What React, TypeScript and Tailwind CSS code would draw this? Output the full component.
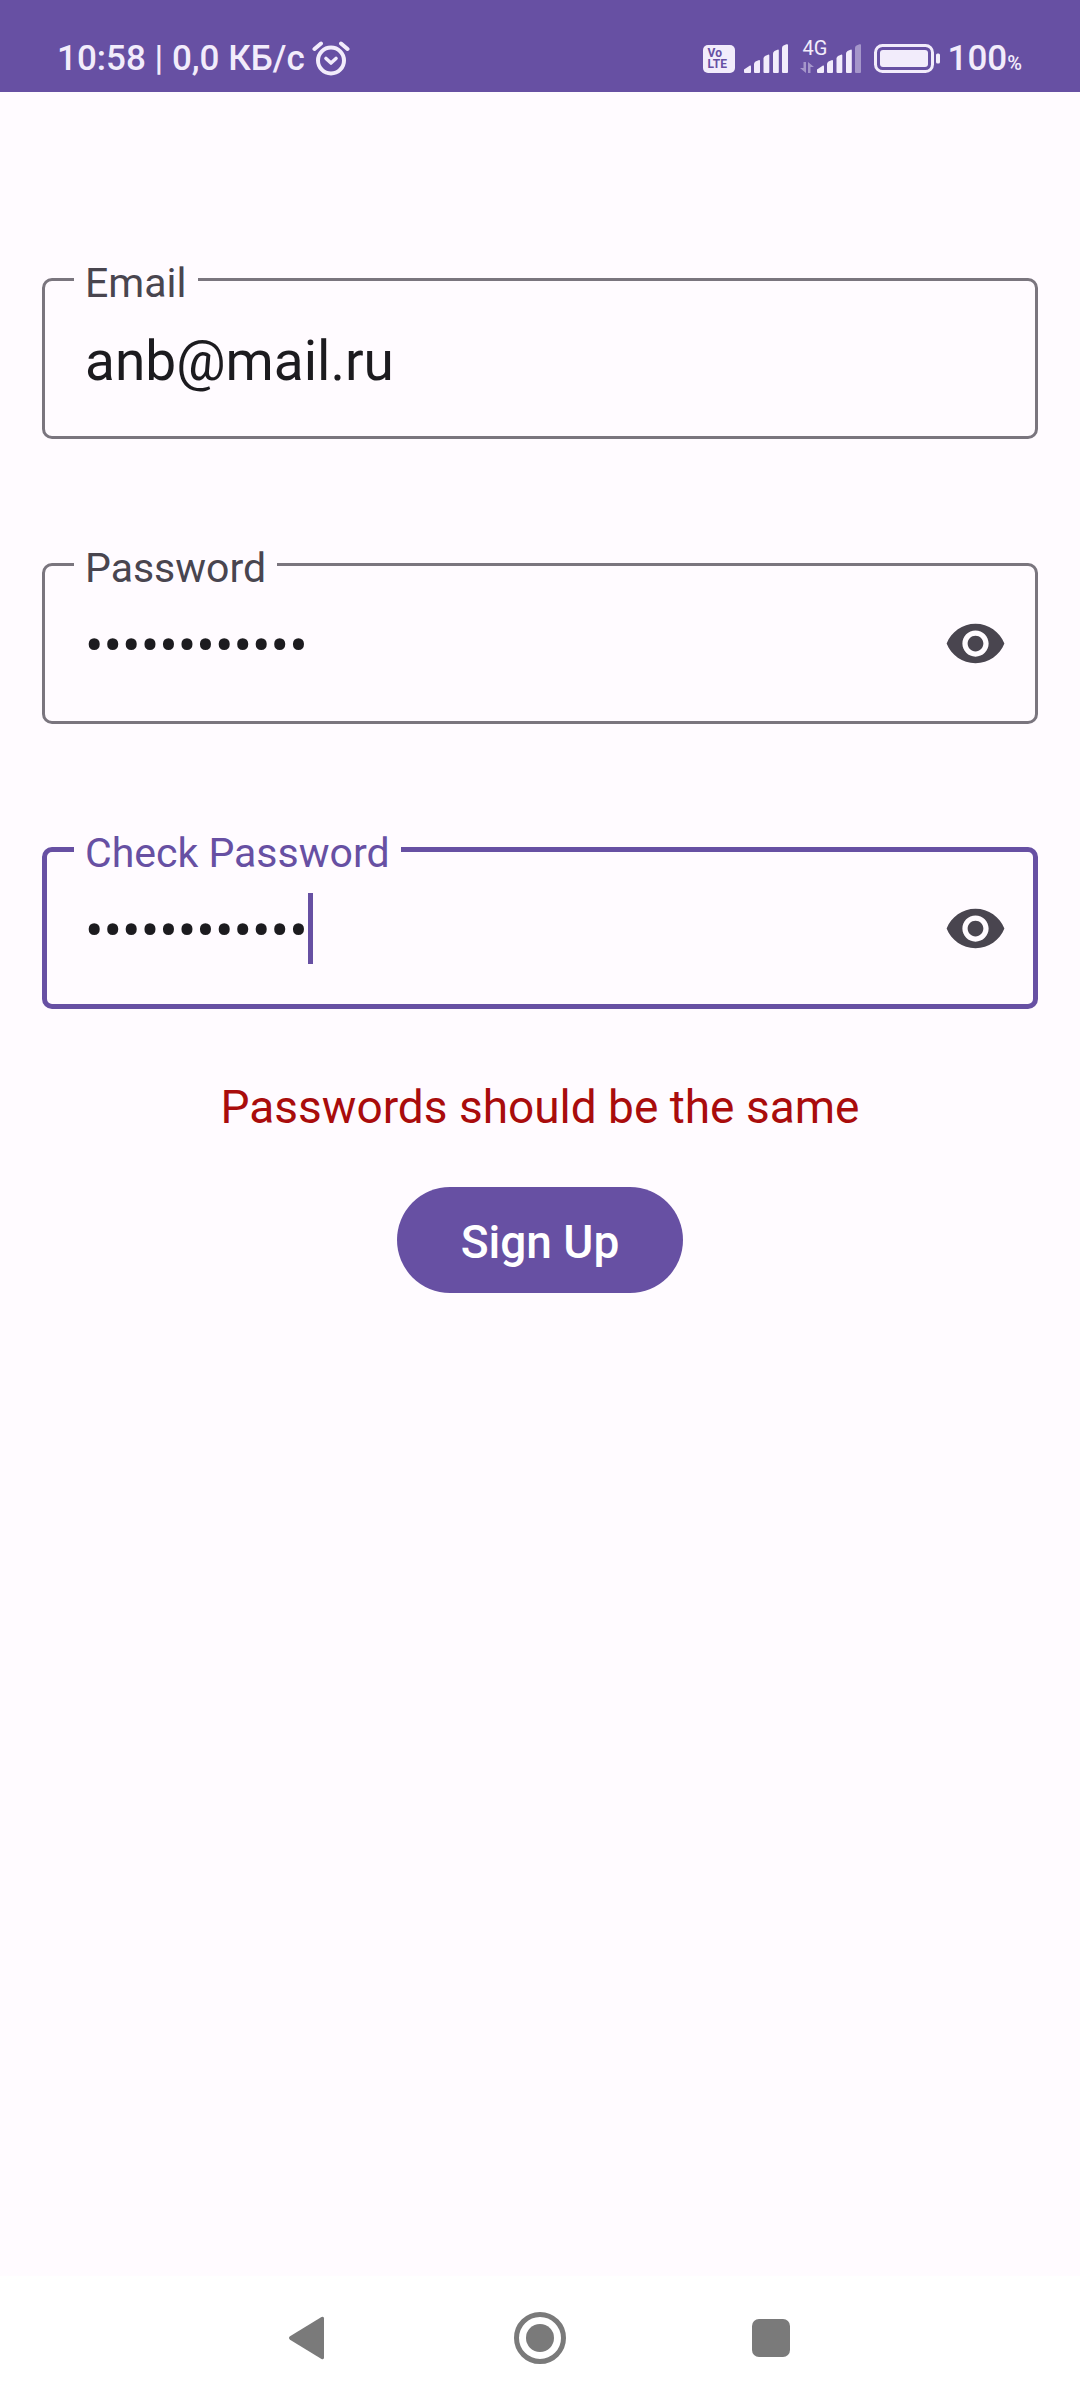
import { useState } from "react";
import type { ReactNode } from "react";

type FieldProps = {
  id: string;
  label: string;
  type: "email" | "password";
  initial: string;
  active?: boolean;
};

function EyeIcon() {
  return (
    <svg viewBox="0 0 24 24" className="size-[63px]" fill="currentColor" aria-hidden="true">
      <path d="M12 4.5C7 4.5 2.73 7.61 1 12c1.73 4.39 6 7.5 11 7.5s9.27-3.11 11-7.5c-1.73-4.39-6-7.5-11-7.5zM12 17c-2.76 0-5-2.24-5-5s2.24-5 5-5 5 2.24 5 5-2.24 5-5 5zm0-8c-1.66 0-3 1.34-3 3s1.34 3 3 3 3-1.34 3-3-1.34-3-3-3z" />
    </svg>
  );
}

function OutlinedField({ id, label, type, initial, active = false }: FieldProps) {
  const [value, setValue] = useState(initial);
  const [visible, setVisible] = useState(false);
  const secret = type === "password";
  return (
    <fieldset
      className={
        active
          ? "min-w-0 rounded-[10px] border-5 border-[#6750a3] pr-[26px] pb-6 pl-[27px]"
          : "min-w-0 rounded-[10px] border-3 border-[#7a757e] pr-[28px] pb-[26px] pl-[29px]"
      }
    >
      <legend className="px-[11px] pt-2">
        <label
          htmlFor={id}
          className={
            active
              ? "block text-[41px] leading-[47px] text-[#6750a3]"
              : "block text-[41px] leading-[47px] text-[#49454f]"
          }
        >
          {label}
        </label>
      </legend>
      <div className="flex h-[103px] items-center pl-[11px]">
        <input
          id={id}
          type={secret && visible ? "text" : type}
          value={value}
          onChange={(e) => setValue(e.target.value)}
          className={
            active
              ? "field-sizing-content pt-1 text-[55px] leading-[64px] text-[#1c1b1f] caret-transparent outline-none"
              : "min-w-0 flex-1 pt-1 text-[55px] leading-[64px] text-[#1c1b1f] outline-none"
          }
        />
        {active && <span className="h-[71px] w-[5px] bg-[#6750a3]" />}
        {secret && (
          <button
            type="button"
            aria-label={visible ? "Hide password" : "Show password"}
            onClick={() => setVisible(!visible)}
            className="ml-auto text-[#49454f]"
          >
            <EyeIcon />
          </button>
        )}
      </div>
    </fieldset>
  );
}

function SignalIcon({ weakLast = false }: { weakLast?: boolean }) {
  return (
    <svg viewBox="0 0 44 30" className="h-[30px] w-11" fill="currentColor" aria-hidden="true">
      <path d="M0 25.5 L6 21.5 Q7 21 7 22.5 V28 Q7 29 6 29 H1 Q0 29 0 28Z" />
      <path d="M10 20 Q10 18.500 11.500 17.500 L14.500 16.200 Q16 15.700 16 17 V28 Q16 29 15 29 H11 Q10 29 10 28Z" />
      <path d="M19.500 14.500 Q19.500 13 21 12 L24 10.700 Q25.300 10.300 25.300 11.500 V28 Q25.300 29 24.300 29 H20.500 Q19.500 29 19.500 28Z" />
      <path d="M29 9.500 Q29 8 30.500 7 L33.500 5.700 Q34.800 5.300 34.800 6.500 V28 Q34.800 29 33.800 29 H30 Q29 29 29 28Z" />
      <path
        opacity={weakLast ? 0.45 : 1}
        d="M38 4 Q38 2.500 39.500 1.600 L42.500 0.300 Q44 -0.200 44 1 V28 Q44 29 43 29 H39 Q38 29 38 28Z"
      />
    </svg>
  );
}

function AlarmIcon() {
  return (
    <svg
      viewBox="0 0 38 36"
      className="h-9 w-[38px]"
      fill="none"
      stroke="currentColor"
      strokeWidth="4"
      strokeLinecap="round"
      strokeLinejoin="round"
      aria-hidden="true"
    >
      <circle cx="19" cy="19.5" r="13" />
      <path d="M14 17.500 19 22 24 17.500" strokeWidth="3.600" />
      <path d="M2.500 8 9 2.500M35.500 8 29 2.500" />
    </svg>
  );
}

function StatusBar() {
  return (
    <header className="flex h-[92px] items-end justify-between bg-[#6750a3] pr-[58px] pb-[13px] pl-[57px] text-[#f2ecfb]">
      <div className="flex items-center gap-[7px]">
        <span className="text-[35px] leading-[40px] font-medium">10:58 | 0,0 КБ/с</span>
        <AlarmIcon />
      </div>
      <div className="flex items-center">
        <span className="flex h-7 w-8 flex-col items-start justify-center rounded-[5px] bg-current pl-[5px]">
          <span className="text-[12px] leading-[11px] font-bold text-[#6750a3]">Vo</span>
          <span className="text-[12px] leading-[11px] font-bold text-[#6750a3]">LTE</span>
        </span>
        <span className="ml-[9px]">
          <SignalIcon />
        </span>
        <span className="relative ml-3 flex items-end pl-[17px]">
          <span className="absolute -top-[6px] left-[3px] text-[20px] leading-[20px]">4G</span>
          <svg
            viewBox="0 0 14 11"
            className="absolute bottom-[1px] left-0 h-[11px] w-[14px]"
            fill="currentColor"
            opacity="0.45"
            aria-hidden="true"
          >
            <path d="M3.500 0H6V11L0 6H3.500ZM8 0 14 5H10.500V11H8Z" />
          </svg>
          <SignalIcon weakLast />
        </span>
        <svg viewBox="0 0 66 30" className="ml-[13px] h-[30px] w-[66px]" aria-hidden="true">
          <rect x="1.500" y="1.500" width="57" height="26" rx="7" fill="none" stroke="currentColor" strokeWidth="3" />
          <rect x="6" y="6" width="48" height="17" rx="3" fill="currentColor" />
          <rect x="62" y="9.500" width="4" height="10" rx="1.500" fill="currentColor" />
        </svg>
        <span className="ml-2 flex items-baseline text-[35px] leading-[40px] font-medium">
          100<span className="text-[20px] leading-[20px]">%</span>
        </span>
      </div>
    </header>
  );
}

function NavButton({ label, children }: { label: string; children: ReactNode }) {
  return (
    <button type="button" aria-label={label} className="flex w-[52px] justify-center text-[#7a7a7a]">
      <svg viewBox="0 0 52 52" className="size-[52px]" fill="currentColor" aria-hidden="true">
        {children}
      </svg>
    </button>
  );
}

export default function App() {
  return (
    <div className="flex min-h-screen flex-col bg-[#fffbff] font-[Roboto,sans-serif]">
      <StatusBar />
      <main className="flex-1 px-[42px] pt-[160px]">
        <form className="flex flex-col" onSubmit={(e) => e.preventDefault()}>
          <div className="flex flex-col gap-[98px]">
            <OutlinedField id="email" label="Email" type="email" initial="anb@mail.ru" />
            <OutlinedField id="password" label="Password" type="password" initial="password1234" />
            <OutlinedField id="check" label="Check Password" type="password" initial="password4321" active />
          </div>
          <p role="alert" className="mt-[68px] text-center text-[46px] leading-[60px] text-[#a90c0c]">
            Passwords should be the same
          </p>
          <button
            type="submit"
            className="mt-[50px] self-center rounded-full bg-[#6750a3] px-16 pt-[25px] pb-[21px] text-[46px] leading-[60px] font-medium text-white"
          >
            Sign Up
          </button>
        </form>
      </main>
      <nav className="flex h-[124px] items-center justify-center gap-[179px] bg-white">
        <NavButton label="Back">
          <path d="M7 24.300 38.500 5Q41 4 41 6.500V45.500Q41 48 38.500 47L7 27.700Q5 26 7 24.300Z" />
        </NavButton>
        <NavButton label="Home">
          <circle cx="26" cy="26" r="23.500" fill="none" stroke="currentColor" strokeWidth="5" />
          <circle cx="26" cy="26" r="14" />
        </NavButton>
        <NavButton label="Recent apps">
          <rect x="7" y="7" width="38" height="38" rx="7" />
        </NavButton>
      </nav>
    </div>
  );
}
